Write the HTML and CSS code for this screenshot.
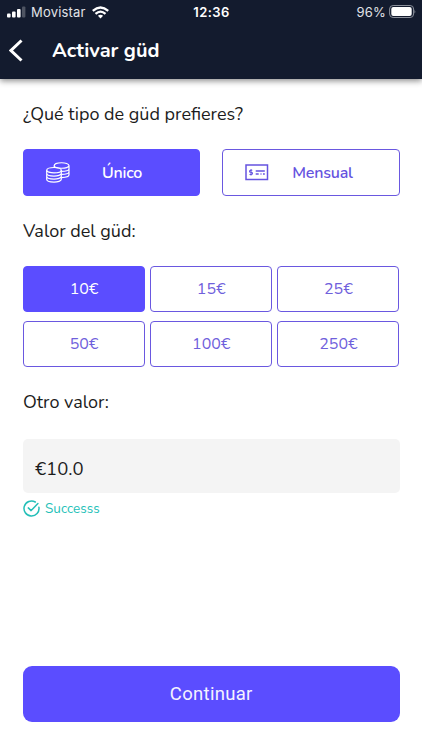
FILE: index.html
```html
<!DOCTYPE html>
<html lang="es">
<head>
<meta charset="utf-8">
<meta name="viewport" content="width=device-width, initial-scale=1">
<title>Activar güd</title>
<link rel="stylesheet" href="styles.css">
</head>
<body>
<header class="header">
  <div class="status">
    <div class="carrier">
      <svg width="19" height="12" viewBox="0 0 19 12" fill="#fff"><rect x="0" y="7.5" width="3.6" height="4" rx="1"/><rect x="5" y="5.5" width="3.6" height="6" rx="1"/><rect x="10" y="3" width="3.6" height="8.500" rx="1"/><rect x="15" y="0.500" width="3.400" height="11" rx="1" opacity=".25"/></svg>
      <span class="carrier-name">Movistar</span>
      <svg width="17" height="13" viewBox="0 0 17 13" fill="none" stroke="#fff" stroke-width="2.3"><path d="M.8 4.800Q8.500 -1.900 16.200 4.800"/><path d="M3.500 7.800Q8.500 3.400 13.500 7.800"/><path d="M8.500 12.400 5.900 9.800Q8.500 7.600 11.100 9.800Z" fill="#fff" stroke="none"/></svg>
    </div>
    <div class="clock">12:36</div>
    <div class="battery">
      <span class="percent">96%</span>
      <svg width="28" height="14" viewBox="0 0 28 14"><rect x="1.600" y=".5" width="24" height="12" rx="3.500" fill="none" stroke="#8b909b"/><rect x="3.300" y="2.100" width="20.400" height="8.800" rx="2" fill="#fff"/><path d="M26.500 4.500Q28 6.500 26.500 8.500Z" fill="#8b909b"/></svg>
    </div>
  </div>
  <div class="titlebar">
    <svg class="back" width="14" height="23" viewBox="0 0 14 23" fill="none" stroke="#fff" stroke-width="3"><path d="M12.500 1.500 2 11.500 12.500 21.500"/></svg>
    <h1>Activar güd</h1>
  </div>
</header>
<main>
  <h2 class="q-type">¿Qué tipo de güd prefieres?</h2>
  <div class="types">
    <button class="type selected">
      <svg class="type-icon" width="24" height="21" viewBox="0 0 24 21" fill="none" stroke="currentColor" stroke-width="1.200"><ellipse cx="8" cy="8.200" rx="7.300" ry="2.700"/><path d="M.7 8.200v9c0 3.800 14.600 3.800 14.600 0v-9M.7 11.200c0 3.800 14.600 3.800 14.600 0M.7 14.200c0 3.800 14.600 3.800 14.600 0"/><path d="M8.200 5.500V3.600c0-3.800 14.800-3.800 14.800 0v9.200c0 1.700-3 2.700-7.500 2.800M8.200 3.600c0 3.500 14.800 3.500 14.800 0M15.300 9.300c4.500 0 7.700-1 7.700-2.600M15.300 12.400c4.500 0 7.700-1 7.700-2.600"/></svg>
      <span class="one">Único</span>
    </button>
    <button class="type">
      <svg class="type-icon" width="24" height="17" viewBox="0 0 24 17" fill="none" stroke="currentColor" stroke-width="1.500"><rect x="1" y="1" width="21.500" height="14.500"/><path d="M7.300 6.200H5.500q-1 0-1 1t1 1.100h1q1 0 1 1t-1 1.100H4.500M6 5v6.600" stroke-width="1.050"/><path d="M10.700 7h9.100M10.700 10h3M15.500 10h1M18 10h1.800"/></svg>
      <span class="month">Mensual</span>
    </button>
  </div>
  <h2 class="q-value">Valor del güd:</h2>
  <div class="amounts">
    <button class="amount selected">10€</button>
    <button class="amount">15€</button>
    <button class="amount">25€</button>
    <button class="amount">50€</button>
    <button class="amount">100€</button>
    <button class="amount">250€</button>
  </div>
  <h2 class="q-other">Otro valor:</h2>
  <div class="field">€10.0</div>
  <div class="success">
    <svg width="17" height="17" viewBox="0 0 17 17" fill="none" stroke="currentColor" stroke-width="1.500" stroke-linecap="round" stroke-linejoin="round"><path d="M15.900 7.200A7.500 7.500 0 1 1 12.300 2"/><path d="m5.300 7.900 2.800 2.700 6.800-7"/></svg>
    <span>Successs</span>
  </div>
  <button class="continue"><span>Continuar</span></button>
</main>
</body>
</html>
```

FILE: styles.css
```css
* { box-sizing: border-box; }
body {
  margin: 0;
  height: 750px;
  display: flex;
  flex-direction: column;
  overflow: hidden;
  background: #fff;
  color: #1c1c1c;
  font-family: Nunito, "Noto Sans", sans-serif;
}
button { font: inherit; padding: 0; }
svg { display: block; flex: none; }
.header {
  height: 79px;
  flex: none;
  background: #131b2e;
  color: #fff;
  box-shadow: 0 2px 6px rgba(0, 0, 0, .45);
}
.status {
  height: 24px;
  display: grid;
  grid-template-columns: 1fr auto 1fr;
  align-items: center;
  padding: 0 6px 0 7px;
  font: 13px/24px Inter, sans-serif;
}
.carrier, .battery { display: flex; align-items: center; }
.carrier-name { margin: 0 6px 0 5px; color: #e1e3e8; letter-spacing: .2px; }
.clock { font-weight: 600; letter-spacing: .45px; }
.battery { justify-content: flex-end; gap: 2px; }
.percent { color: #e1e3e8; letter-spacing: .2px; }
.titlebar { height: 53px; display: flex; align-items: center; padding-left: 9px; }
h1 { margin: 0 0 0 29px; font-size: 20px; line-height: 26px; font-weight: 700; }
main {
  flex: 1;
  display: flex;
  flex-direction: column;
  padding: 22px 22.500px 28px 23px;
}
h2 { margin: 0; font-size: 18px; line-height: 26px; font-weight: 400; white-space: nowrap; }
.types { display: grid; grid-template-columns: 1fr 1fr; gap: 22px; margin: 22px 0 22px; }
.type {
  height: 47px;
  display: flex;
  align-items: center;
  padding-left: 22px;
  border: 1px solid #6a58e0;
  border-radius: 4px;
  background: #fff;
  color: #6553e0;
  font-size: 16px;
  font-weight: 600;
  letter-spacing: -.2px;
}
.one { margin-left: 32px; }
.month { margin-left: 23px; }
.type.selected, .amount.selected { background: #5b4dff; border-color: #5b4dff; color: #fff; }
.amounts { display: grid; grid-template-columns: repeat(3, 1fr); gap: 9px 5px; margin: 22px 0 22px; }
.amount {
  height: 46px;
  border: 1px solid #6a58e0;
  border-radius: 4px;
  background: #fff;
  color: #6f60dc;
  font-size: 16px;
}
.field {
  height: 54px;
  margin-top: 24px;
  padding: 5px 12px 0;
  border-radius: 5px;
  background: #f4f4f4;
  font-size: 18.500px;
  line-height: 50px;
}
.success { display: flex; align-items: center; gap: 5px; height: 20px; margin-top: 5px; color: #24bfb8; font-size: 13.500px; }
.continue {
  height: 56px;
  margin-top: auto;
  border: 0;
  border-radius: 9px;
  background: #5b4dff;
  color: #f4f2ff;
  font: 18.500px/56px Roboto, sans-serif;
  letter-spacing: .3px;
}
```
